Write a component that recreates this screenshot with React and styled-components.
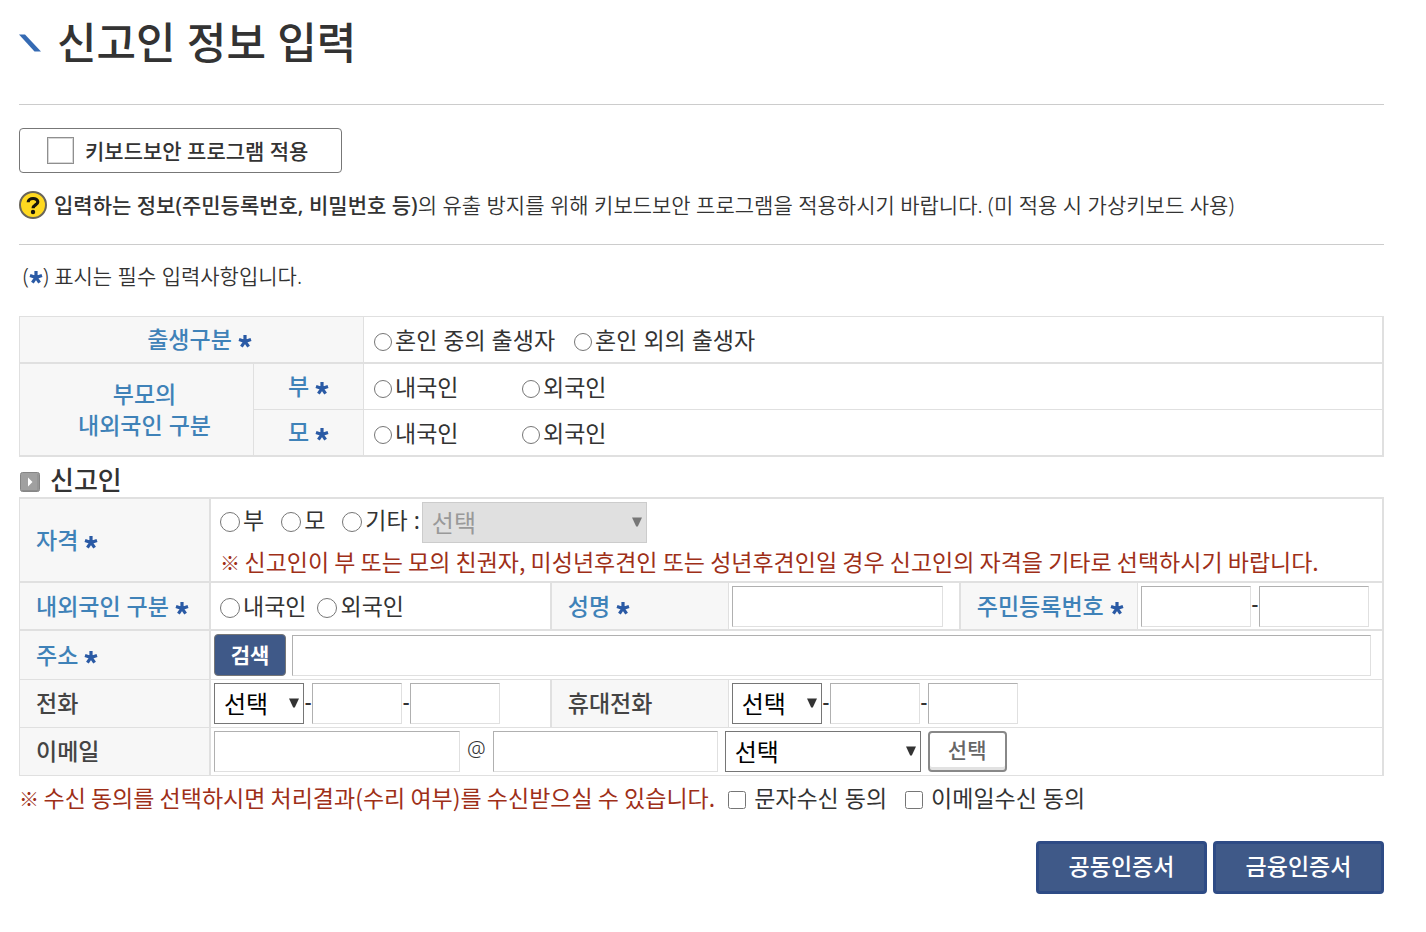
import { useId } from "react";
import styled, { createGlobalStyle } from "styled-components";

const options = ["선택"];

function RequiredMark() {
    return (
        <Mark viewBox="0 0 14 14" role="img" aria-label="필수">
            <path d="M7 7.4V1M7 7.4L1 5.4M7 7.4L13 5.4M7 7.4L3.4 12.6M7 7.4L10.6 12.6" stroke="#2a5aa5" strokeWidth="3.2" fill="none" />
        </Mark>
    )
}

function Choice({type = "radio", name, label, size, gap, width}) {
    return (
        <ChoiceLabel $gap={gap} $width={width}>
            <ChoiceInput type={type} name={name} $size={size} />
            {label}
        </ChoiceLabel>
    )
}

function SelectBox({label, width, disabled}) {
    return (
        <SelectWrap $width={width}>
            <Select aria-label={label} disabled={disabled}>
                {options.map((option) => <option key={option}>{option}</option>)}
            </Select>
            <Arrow viewBox="0 0 10 10" $disabled={disabled} aria-hidden="true">
                <path d="M0 0.5H10L5.8 9.5H4.2Z" fill="currentColor" />
            </Arrow>
        </SelectWrap>
    )
}

function PhoneInputs({label}) {
    return (
        <Fields>
            <SelectBox label={`${label} 앞자리`} width={90} />
            <Dash>-</Dash>
            <TextInput aria-label={`${label} 가운데자리`} $width={90} />
            <Dash>-</Dash>
            <TextInput aria-label={`${label} 뒷자리`} $width={90} />
        </Fields>
    )
}

export default function App() {
    const nameId = useId();
    const addressId = useId();
    const emailId = useId();
    return (
        <Page>
            <GlobalStyle />
            <TitleBar>
                <TitleMark viewBox="0 0 22 18" aria-hidden="true">
                    <path d="M0 0.5H6L22 17.5H15.5Z" fill="#356ab3" />
                </TitleMark>
                <Title>신고인 정보 입력</Title>
            </TitleBar>
            <Security>
                <SecurityLabel>
                    <SecurityCheck type="checkbox" />
                    키보드보안 프로그램 적용
                </SecurityLabel>
                <Notice>
                    <HelpIcon viewBox="0 0 28 28" aria-hidden="true">
                        <circle cx="14" cy="14" r="13" fill="#ffd920" stroke="#69655a" strokeWidth="2" />
                        <path d="M9.2 11.3C9.2 6.4 18.8 6.2 18.8 10.9C18.8 14 14.1 13.7 14.1 17.2" fill="none" stroke="#17150c" strokeWidth="3.2" />
                        <circle cx="14" cy="21" r="2.2" fill="#17150c" />
                    </HelpIcon>
                    <p><strong>입력하는 정보(주민등록번호, 비밀번호 등)</strong>의 유출 방지를 위해 키보드보안 프로그램을 적용하시기 바랍니다. (미 적용 시 가상키보드 사용)</p>
                </Notice>
            </Security>
            <RequiredNote>(<RequiredMark />) 표시는 필수 입력사항입니다.</RequiredNote>

            <Table>
                <colgroup>
                    <col width="234" />
                    <col width="110" />
                    <col />
                </colgroup>
                <tbody>
                    <tr>
                        <Th colSpan={2} $center $indent={16} $bottom={2}>출생구분 <RequiredMark /></Th>
                        <Td $height={47} $bottom={2}>
                            <Choices $inset={7}>
                                <Choice name="birth" label="혼인 중의 출생자" size={18} gap={19} />
                                <Choice name="birth" label="혼인 외의 출생자" size={18} />
                            </Choices>
                        </Td>
                    </tr>
                    <tr>
                        <Th rowSpan={2} $center $indent={16} $bottom={2}>부모의<br />내외국인 구분</Th>
                        <Th $center>부 <RequiredMark /></Th>
                        <Td $height={46}>
                            <Choices $inset={7}>
                                <Choice name="father" label="내국인" size={18} width={148} />
                                <Choice name="father" label="외국인" size={18} />
                            </Choices>
                        </Td>
                    </tr>
                    <tr>
                        <Th $center $bottom={2}>모 <RequiredMark /></Th>
                        <Td $height={47} $bottom={2}>
                            <Choices $inset={7}>
                                <Choice name="mother" label="내국인" size={18} width={148} />
                                <Choice name="mother" label="외국인" size={18} />
                            </Choices>
                        </Td>
                    </tr>
                </tbody>
            </Table>

            <SectionTitle>
                <SectionIcon viewBox="0 0 20 20" aria-hidden="true">
                    <rect x="0.5" y="0.5" width="19" height="19" rx="2" fill="#a0a0a0" stroke="#858585" />
                    <path d="M2 18.5H18V2" fill="none" stroke="#8b8b8b" />
                    <path d="M8 5.5L12.5 10L8 14.5Z" fill="#fff" />
                </SectionIcon>
                신고인
            </SectionTitle>

            <Table $top={2}>
                <colgroup>
                    <col width="191" />
                    <col width="25%" />
                    <col width="177" />
                    <col width="232" />
                    <col width="177" />
                    <col />
                </colgroup>
                <tbody>
                    <tr>
                        <Th $right={2} $bottom={2}>자격 <RequiredMark /></Th>
                        <Td colSpan={5} $height={84} $bottom={2}>
                            <Choices $raise={4}>
                                <Choice name="role" label="부" size={20} gap={17} />
                                <Choice name="role" label="모" size={20} gap={17} />
                                <Choice name="role" label="기타 :" size={20} gap={2} />
                                <SelectBox label="기타 자격" width={225} disabled />
                            </Choices>
                            <Warning $indent={6}><Symbol>※ </Symbol>신고인이 부 또는 모의 친권자, 미성년후견인 또는 성년후견인일 경우 신고인의 자격을 기타로 선택하시기 바랍니다.</Warning>
                        </Td>
                    </tr>
                    <tr>
                        <Th $right={2} $bottom={2}>내외국인 구분 <RequiredMark /></Th>
                        <Td $height={48} $right={2} $bottom={2}>
                            <Choices>
                                <Choice name="nation" label="내국인" size={20} gap={11} />
                                <Choice name="nation" label="외국인" size={20} />
                            </Choices>
                        </Td>
                        <Th $bottom={2}><label htmlFor={nameId}>성명 <RequiredMark /></label></Th>
                        <Td $right={2} $bottom={2}>
                            <Fields><TextInput id={nameId} $width={211} /></Fields>
                        </Td>
                        <Th $bottom={2}>주민등록번호 <RequiredMark /></Th>
                        <Td $bottom={2}>
                            <Fields>
                                <TextInput aria-label="주민등록번호 앞자리" $width={110} />
                                <Dash>-</Dash>
                                <TextInput type="password" aria-label="주민등록번호 뒷자리" $width={110} />
                            </Fields>
                        </Td>
                    </tr>
                    <tr>
                        <Th $right={2}><label htmlFor={addressId}>주소 <RequiredMark /></label></Th>
                        <Td colSpan={5} $height={49}>
                            <Fields $gap={6} $end={8}>
                                <SearchButton type="button">검색</SearchButton>
                                <TextInput id={addressId} />
                            </Fields>
                        </Td>
                    </tr>
                    <tr>
                        <Th $optional $right={2}>전화</Th>
                        <Td $height={48} $right={2}><PhoneInputs label="전화" /></Td>
                        <Th $optional>휴대전화</Th>
                        <Td colSpan={3}><PhoneInputs label="휴대전화" /></Td>
                    </tr>
                    <tr>
                        <Th $optional $right={2}><label htmlFor={emailId}>이메일</label></Th>
                        <Td colSpan={5} $height={48}>
                            <Fields $gap={7}>
                                <TextInput id={emailId} $width={246} />
                                <At>@</At>
                                <TextInput aria-label="이메일 도메인" $width={225} />
                                <SelectBox label="도메인 선택" width={196} />
                                <PickButton type="button">선택</PickButton>
                            </Fields>
                        </Td>
                    </tr>
                </tbody>
            </Table>

            <Agreement>
                <Warning><Symbol>※ </Symbol>수신 동의를 선택하시면 처리결과(수리 여부)를 수신받으실 수 있습니다.</Warning>
                <Choice type="checkbox" name="sms" label="문자수신 동의" size={18} gap={18} />
                <Choice type="checkbox" name="mail" label="이메일수신 동의" size={18} />
            </Agreement>
            <Actions>
                <CertButton type="button">공동인증서</CertButton>
                <CertButton type="button">금융인증서</CertButton>
            </Actions>
        </Page>
    )
}

const GlobalStyle = createGlobalStyle`
  * {
    box-sizing: border-box;
  }
  body {
    margin: 0;
    background: #fff;
    color: #333;
    font-family: "Noto Sans", "Noto Sans CJK KR", sans-serif;
    font-size: 21px;
    line-height: 30px;
  }
  h1, h2, p {
    margin: 0;
  }
  input, select, button {
    font-family: inherit;
  }
`

const Page = styled.main`
  padding: 0 42px 36px 19px;
`

const TitleBar = styled.header`
  display: flex;
  align-items: center;
  gap: 16px;
  height: 105px;
  padding-bottom: 19px;
  border-bottom: 1px solid #ccc;
`

const TitleMark = styled.svg`
  width: 22px;
  height: 18px;
`

const Title = styled.h1`
  font-size: 43px;
  line-height: 64px;
  font-weight: 500;
`

const Security = styled.section`
  padding: 23px 0 24px;
  border-bottom: 1px solid #ccc;
`

const SecurityLabel = styled.label`
  display: inline-flex;
  align-items: center;
  gap: 11px;
  height: 45px;
  padding: 0 33px 0 27px;
  border: 1px solid #777;
  border-radius: 4px;
  font-weight: 500;
`

const SecurityCheck = styled.input`
  appearance: none;
  width: 27px;
  height: 27px;
  margin: 0;
  border: 1px solid #8f8f8f;
  box-shadow: inset 0 0 0 1px #d8d8d8;
  background: #fff;

  &:checked {
    background: #3f5988;
  }
`

const Notice = styled.div`
  display: flex;
  align-items: center;
  gap: 7px;
  margin-top: 17px;
  font-weight: 350;

  strong {
    font-weight: 500;
  }
`

const HelpIcon = styled.svg`
  width: 28px;
  height: 28px;
  flex-shrink: 0;
`

const RequiredNote = styled.p`
  padding: 16px 4px 25px;
  font-weight: 350;
`

const Mark = styled.svg`
  width: 14px;
  height: 14px;
  vertical-align: 0;
`

const Table = styled.table`
  width: 100%;
  table-layout: fixed;
  border-collapse: separate;
  border-spacing: 0;
  border: solid #e0e0e0;
  border-width: ${({$top = 1}) => $top}px 1px 0 1px;
`

const Th = styled.th`
  padding: 0 ${({$center}) => $center ? 0 : 16}px 0 ${({$center, $indent = 0}) => $center ? $indent : 16}px;
  border: solid #e0e0e0;
  border-width: 0 ${({$right = 1}) => $right}px ${({$bottom = 1}) => $bottom}px 0;
  background: #f7f7f7;
  color: ${({$optional}) => $optional ? "#444" : "#3f82b8"};
  font-size: 23px;
  line-height: 31px;
  font-weight: 500;
  text-align: ${({$center}) => $center ? "center" : "left"};
  white-space: nowrap;
`

const Td = styled.td`
  height: ${({$height}) => $height ? `${$height}px` : "auto"};
  padding: 0 3px;
  border: solid #e0e0e0;
  border-width: 0 ${({$right = 1}) => $right}px ${({$bottom = 1}) => $bottom}px 0;
`

const ChoiceLabel = styled.label`
  display: inline-flex;
  align-items: center;
  gap: 3px;
  width: ${({$width}) => $width ? `${$width}px` : "auto"};
  margin-right: ${({$gap = 0}) => $gap}px;
  white-space: nowrap;
`

const Choices = styled.div`
  display: flex;
  align-items: center;
  padding-left: ${({$inset = 6}) => $inset}px;
  padding-top: ${({$raise}) => $raise ? 2 : 0}px;
  font-size: 23px;
  line-height: 32px;

  ${ChoiceLabel} {
    margin-bottom: ${({$raise = 0}) => $raise}px;
  }
`

const ChoiceInput = styled.input`
  width: ${({$size}) => $size}px;
  height: ${({$size}) => $size}px;
  margin: 4px ${({type}) => type === "checkbox" ? 5 : 0}px 0 0;
`

const Fields = styled.div`
  display: flex;
  align-items: center;
  gap: ${({$gap = 0}) => $gap}px;
  padding-right: ${({$end = 0}) => $end}px;
`

const TextInput = styled.input`
  flex: ${({$width}) => $width ? `0 0 ${$width}px` : "1"};
  min-width: 0;
  height: 41px;
  padding: 0 8px;
  border: 1px solid #e0e0e0;
  border-top-color: #b0b0b0;
  border-left-color: #b0b0b0;
  font-size: 23px;
`

const SelectWrap = styled.span`
  position: relative;
  flex: 0 0 ${({$width}) => $width}px;
`

const Select = styled.select`
  appearance: none;
  display: block;
  width: 100%;
  height: 41px;
  padding: 0 9px;
  border: 1px solid #767676;
  border-radius: 0;
  background: #fff;
  color: #000;
  font-size: 24px;

  &:disabled {
    border-color: #ccc;
    background: #e0e0e0;
    color: #999;
    opacity: 1;
  }
`

const Arrow = styled.svg`
  position: absolute;
  top: 15px;
  right: 5px;
  width: 10px;
  height: 10px;
  color: ${({$disabled}) => $disabled ? "#777" : "#333"};
  pointer-events: none;
`

const Dash = styled.span`
  width: 8px;
  padding-bottom: 4px;
  text-align: center;
  font-weight: 500;
`

const At = styled.span`
  padding-bottom: 6px;
  font-weight: 350;
`

const SearchButton = styled.button`
  width: 72px;
  height: 42px;
  padding: 0 0 3px;
  border: 1px solid #777;
  border-radius: 4px;
  background: #3f5988;
  color: #fff;
  font-size: 21px;
  font-weight: 700;
`

const PickButton = styled.button`
  width: 79px;
  height: 41px;
  padding: 0 0 5px;
  border: 2px solid #888;
  border-radius: 4px;
  background: #fff;
  box-shadow: inset 0 -3px 0 #e2e2e2;
  color: #666;
  font-size: 21px;
  font-weight: 500;
`

const SectionTitle = styled.h2`
  display: flex;
  align-items: center;
  gap: 10px;
  height: 40px;
  padding: 6px 0 0 1px;
  font-size: 26px;
  line-height: 34px;
  font-weight: 500;
`

const SectionIcon = styled.svg`
  width: 20px;
  height: 20px;
  margin-top: 4px;
`

const Warning = styled.p`
  padding-left: ${({$indent = 0}) => $indent}px;
  color: #9e2f18;
  font-family: "Noto Sans CJK KR", sans-serif;
  font-size: 23px;
  line-height: 37px;
`

const Symbol = styled.span`
  font-size: 20px;
`

const Agreement = styled.div`
  display: flex;
  align-items: center;
  padding-top: 3px;
  font-size: 23px;

  p {
    margin-right: 13px;
  }
`

const Actions = styled.div`
  display: flex;
  justify-content: flex-end;
  gap: 6px;
  margin-top: 24px;
`

const CertButton = styled.button`
  width: 171px;
  height: 53px;
  padding: 0 0 6px;
  border: 3px solid #2e4b85;
  border-radius: 4px;
  background: #3f5988;
  color: #fff;
  font-size: 23px;
  font-weight: 500;
`
